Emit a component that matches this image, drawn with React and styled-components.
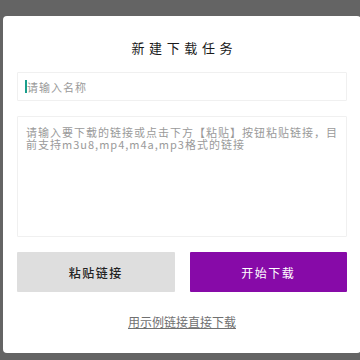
import styled, { createGlobalStyle } from "styled-components";

const GlobalStyle = createGlobalStyle`
  html, body {
    margin: 0;
    padding: 0;
    background: #646464;
    width: 360px;
    height: 360px;
    overflow: hidden;
  }
  * {
    box-sizing: border-box;
  }
`;

const Dialog = styled.div`
  margin: 16px 0 0 3px;
  width: 358px;
  height: 337px;
  background: #fff;
  border-radius: 4px;
  padding: 0 14px;
  display: flex;
  flex-direction: column;
  font-family: "Noto Sans CJK SC", "Noto Sans", sans-serif;
`;

const Title = styled.h2`
  margin: 0;
  height: 56px;
  display: flex;
  align-items: center;
  justify-content: center;
  padding-top: 6px;
  font-size: 13px;
  font-weight: 400;
  letter-spacing: 4.6px;
  color: #1a1a1a;
  text-indent: 4.6px;
`;

const Field = styled.div`
  position: relative;
  display: flex;
  flex-direction: column;
`;

const NameInput = styled.input`
  height: 29px;
  border: 1px solid #f0f0f0;
  border-radius: 1px;
  padding: 0 9px;
  font-family: inherit;
  font-size: 11px;
  letter-spacing: 1px;
  color: #333;
  caret-color: #1a9e8c;
  outline: none;

  &::placeholder {
    color: #9a9a9a;
  }
`;

const Caret = styled.span`
  position: absolute;
  left: 8px;
  top: 8px;
  width: 1.5px;
  height: 13px;
  background: #1a9e8c;
`;

const LinkArea = styled.textarea`
  margin-top: 15px;
  height: 121px;
  border: 1px solid #f0f0f0;
  border-radius: 1px;
  padding: 9px 8px;
  font-family: inherit;
  font-size: 11px;
  line-height: 12px;
  letter-spacing: 1px;
  resize: none;
  outline: none;

  &::placeholder {
    color: #9a9a9a;
  }
`;

const Actions = styled.div`
  margin-top: 15px;
  display: grid;
  grid-template-columns: 1fr 1fr;
  gap: 15px;
`;

const Button = styled.button`
  height: 40px;
  border: none;
  border-radius: 1px;
  background: ${(p) => (p.$primary ? "#870aa8" : "#dedede")};
  color: ${(p) => (p.$primary ? "#fff" : "#222")};
  font-family: inherit;
  font-size: 12px;
  letter-spacing: 1.5px;
  font-weight: ${(p) => (p.$primary ? 400 : 500)};
  cursor: pointer;
`;

const SampleLink = styled.a`
  margin-top: 21px;
  align-self: center;
  font-size: 12px;
  color: #707070;
  text-decoration: underline;
  cursor: pointer;
`;

const App = () => {
  return (
    <>
      <GlobalStyle />
      <Dialog>
        <Title>新建下载任务</Title>
        <Field>
          <NameInput placeholder="请输入名称" />
          <Caret />
        </Field>
        <LinkArea placeholder="请输入要下载的链接或点击下方【粘贴】按钮粘贴链接，目前支持m3u8,mp4,m4a,mp3格式的链接" />
        <Actions>
          <Button>粘贴链接</Button>
          <Button $primary>开始下载</Button>
        </Actions>
        <SampleLink>用示例链接直接下载</SampleLink>
      </Dialog>
    </>
  );
};

export default App;
